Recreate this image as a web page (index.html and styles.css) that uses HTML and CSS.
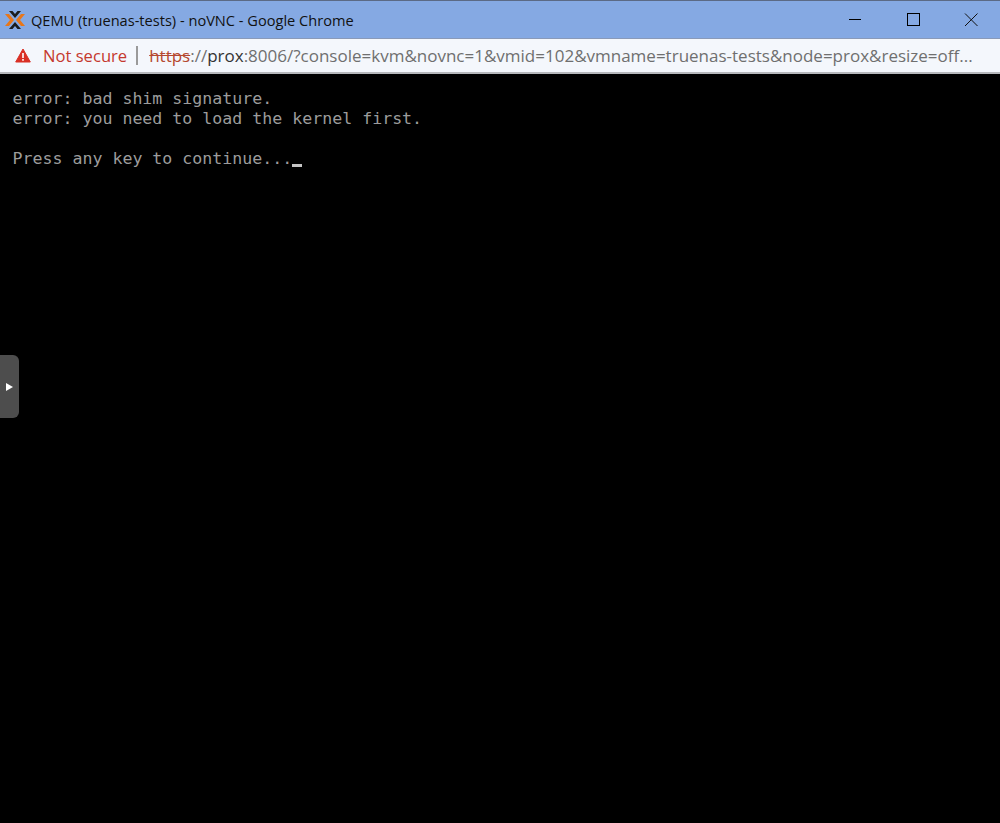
FILE: index.html
```html
<!DOCTYPE html>
<html lang="en">
<head>
<meta charset="utf-8">
<title>QEMU (truenas-tests) - noVNC - Google Chrome</title>
<link rel="stylesheet" href="styles.css">
</head>
<body>
<div class="window">
  <header class="titlebar">
    <svg class="logo" width="20" height="20" viewBox="0 0 20 20">
      <path d="M0 4h4l5 6-5 6H0l5-6zM20 4h-4l-5 6 5 6h4l-5-6z" fill="#e8771a"/>
      <path d="M4 1h3.500L10 4l2.500-3H16l-6 7zM4 19h3.500L10 16l2.500 3H16l-6-7z" fill="#1c1c1c"/>
    </svg>
    <span class="title">QEMU (truenas-tests) - noVNC - Google Chrome</span>
    <div class="controls">
      <svg class="ctl" width="14" height="14" viewBox="0 0 14 14"><path d="M1 6.500h12" stroke="#000" fill="none"/></svg>
      <svg class="ctl" width="14" height="14" viewBox="0 0 14 14"><rect x="1.500" y=".5" width="12" height="12" stroke="#000" fill="none"/></svg>
      <svg class="ctl" width="14" height="14" viewBox="0 0 14 14"><path d="M1 .5l12.500 12.500M13.500 .5L1 13" stroke="#111" fill="none"/></svg>
    </div>
  </header>
  <div class="addressbar">
    <svg class="warn" width="16" height="15" viewBox="0 0 16 15"><path d="M8 1L15.300 14H.7z" fill="#d93025" stroke="#d93025" stroke-linejoin="round"/><path d="M7.200 5h1.600v5H7.200zM7.200 11h1.600v1.700H7.200z" fill="#fff"/></svg>
    <span class="notsecure">Not secure</span>
    <span class="sep"></span>
    <span class="url"><span class="scheme">https</span><span class="faint">://</span><span class="host">prox</span>:8006/?console=kvm&amp;novnc=1&amp;vmid=102&amp;vmname=truenas-tests&amp;node=prox&amp;resize=off...</span>
  </div>
  <main class="console">
    <pre class="screen">error: bad shim signature.
error: you need to load the kernel first.

Press any key to continue...<span class="cursor"></span></pre>
  </main>
  <div class="handle"><span class="arrow"></span></div>
</div>
</body>
</html>
```
FILE: styles.css
```css
* { box-sizing: border-box; }
html, body { margin: 0; height: 100%; background: #000; overflow: hidden; }
.window { position: relative; display: flex; flex-direction: column; height: 823px; }
.titlebar {
  display: flex; align-items: center; height: 39px; flex: none;
  padding-left: 5px; background: #85a9e3;
  border-top: 1px solid #5b6a85; border-bottom: 1px solid #8a9ab8;
}
.logo { flex: none; }
.title { margin-left: 6px; font: 14.600px "Open Sans", "Noto Sans", sans-serif; color: #111; white-space: nowrap; }
.controls { margin-left: auto; display: flex; gap: 44px; padding-right: 22px; }
.ctl { display: block; }
.addressbar {
  display: flex; align-items: center; height: 35px; flex: none;
  padding-left: 15px; background: #f4f7fc;
  border-bottom: 2px solid #b6b8bc;
  font: 17px "Open Sans", "Noto Sans", sans-serif; white-space: nowrap;
}
.warn { flex: none; }
.notsecure { margin-left: 12px; font-size: 16.600px; color: #c5392e; }
.sep { width: 2px; height: 19px; margin: 0 11px 0 9px; background: #9a9a9a; flex: none; }
.url { color: #6f6f6f; }
.scheme { color: #b5482f; text-decoration: line-through; }
.host { color: #333; }
.console { flex: 1; background: #000; padding: 15px 12.500px; }
.screen {
  margin: 0; font: 16.600px/20px "DejaVu Sans Mono", "Liberation Mono", monospace;
  color: #9c9c9c;
}
.cursor { display: inline-block; width: 10px; height: 3px; background: #c4c4c4; vertical-align: -3px; }
.handle {
  position: absolute; left: 0; top: 355px; width: 19px; height: 63px;
  display: flex; align-items: center; padding-left: 6px;
  background: #4d4d4d; border-radius: 0 6px 6px 0;
}
.arrow {
  width: 0; height: 0;
  border-left: 7px solid #fff; border-top: 4px solid transparent; border-bottom: 4px solid transparent;
}
```
